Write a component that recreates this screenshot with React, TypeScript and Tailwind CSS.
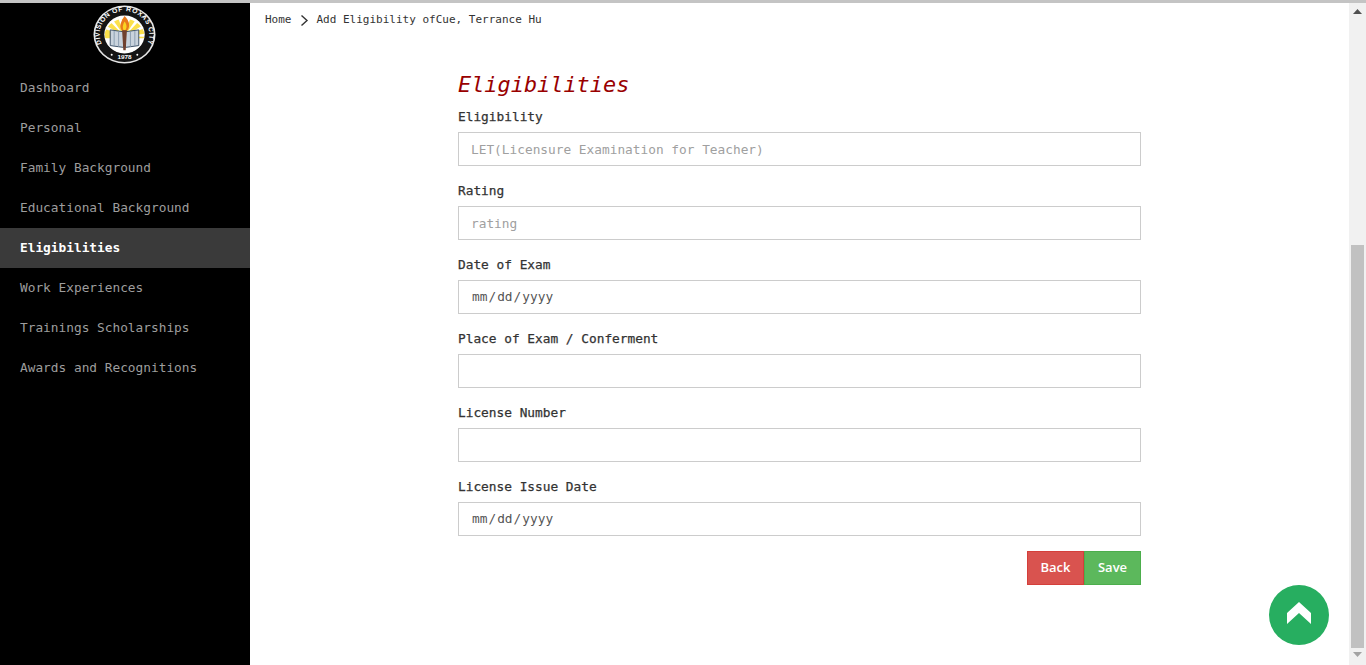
import React from "react";

const mono = "font-['DejaVu_Sans_Mono','Liberation_Mono',monospace]";

const nav = [
  "Dashboard",
  "Personal",
  "Family Background",
  "Educational Background",
  "Eligibilities",
  "Work Experiences",
  "Trainings Scholarships",
  "Awards and Recognitions",
];

const inputCls =
  "block w-full h-[34px] bg-white border border-[#cccccc] px-[12px] text-[12.8px] text-[#555] outline-none placeholder:text-[#a0a0a0] [&::-webkit-calendar-picker-indicator]:hidden " +
  mono;

function Logo() {
  const rays = [-75, -50, -25, 0, 25, 50, 75];
  return (
    <svg width="63" height="59" viewBox="0 0 64 64" preserveAspectRatio="none" aria-label="Division of Roxas City seal">
      <defs>
        <path id="sealTop" d="M 14.2 49.8 A 25.2 25.2 0 1 1 49.8 49.8" />
        <clipPath id="sealSun">
          <circle cx="32" cy="32" r="20" />
        </clipPath>
      </defs>
      <circle cx="32" cy="32" r="31.5" fill="#e6e6e6" />
      <circle cx="32" cy="32" r="29.8" fill="#141414" />
      <circle cx="32" cy="32" r="20.5" fill="#ffffff" />
      <g clipPath="url(#sealSun)">
        <path d="M11 36 A21 21 0 0 1 53 36 Z" fill="#fbe04a" />
        {rays.map((r) => (
          <path key={r} d="M32 34 L30 9 L34 9 Z" fill="#ffffff" transform={`rotate(${r + 12} 32 34)`} />
        ))}
        <path d="M12 41 H52 V54 H12 Z" fill="#ffffff" />
      </g>
      <path d="M17.5 27 L31 29 V46 L17.5 44 Z" fill="#c9d3dd" stroke="#3b4f66" strokeWidth="1" />
      <path d="M46.5 27 L33 29 V46 L46.5 44 Z" fill="#c9d3dd" stroke="#3b4f66" strokeWidth="1" />
      <path d="M21.5 28 V45 M26 28.5 V45.5 M38 28.5 V45.5 M42.5 28 V45" stroke="#8397ab" strokeWidth="0.9" />
      <path d="M29.5 27 H34.5 L33.2 49 H30.8 Z" fill="#70412f" />
      <path d="M32 12 C37 17 38 23 35 27.5 H29 C26.5 23 28 19 32 12 Z" fill="#e87a1c" />
      <path d="M32 18 C34.5 21 34.5 25 33 27 H31 C29.8 25 30 22 32 18 Z" fill="#f9d423" />
      <text fill="#fff" fontSize="7" fontWeight="700" fontFamily="'Liberation Sans',sans-serif" letterSpacing="0.6">
        <textPath href="#sealTop" startOffset="50%" textAnchor="middle">DIVISION OF ROXAS CITY</textPath>
      </text>
      <text fill="#fff" fontSize="6.5" fontWeight="700" fontFamily="'Liberation Sans',sans-serif" textAnchor="middle" x="32" y="59">
        1978
      </text>
      <circle cx="19" cy="54" r="1" fill="#fff" />
      <circle cx="45" cy="54" r="1" fill="#fff" />
    </svg>
  );
}

function Field({ label, placeholder, type = "text" }: { label: string; placeholder?: string; type?: string }) {
  return (
    <div className="mb-[15px]">
      <label className={"block h-[19px] mb-[6px] text-[12.8px] leading-[19px] text-[#333] [-webkit-text-stroke:0.25px_#333] " + mono}>{label}</label>
      <input className={inputCls} type={type} placeholder={placeholder} />
    </div>
  );
}

export default function App() {
  return (
    <div className="relative h-[665px] w-[1366px] overflow-hidden bg-white flex flex-col">
      <div className="h-[3px] shrink-0 bg-[#c4c4c4]" />
      <div className="flex flex-1 min-h-0">
        <aside className="w-[250px] shrink-0 bg-black">
          <div className="h-[65px] flex items-start justify-center pt-[2px] pr-[1px]">
            <Logo />
          </div>
          <nav>
            {nav.map((n) => (
              <div
                key={n}
                className={
                  "h-[40px] px-[20px] flex items-center text-[12.8px] " +
                  mono +
                  (n === "Eligibilities" ? " bg-[#3a3a3a] text-white font-bold" : " text-[#9d9d9d]")
                }
              >
                {n}
              </div>
            ))}
          </nav>
        </aside>
        <main className="flex-1 min-w-0">
          <div className={"h-[35px] pl-[15px] flex items-center text-[#333] text-[11px] " + mono}>
            <span>Home</span>
            <svg className="mx-[8px]" width="9" height="12" viewBox="0 0 9 12" fill="none">
              <path d="M1.5 0.5 L7 5.5 L1.5 10.5" stroke="#333" strokeWidth="1.4" />
            </svg>
            <span>Add Eligibility ofCue, Terrance Hu</span>
          </div>
          <div className="w-[683px] ml-[208px] pt-[33px]">
            <h1 className={"h-[28px] mb-[8px] text-[21.9px] leading-[28px] italic text-[#990000] " + mono}>Eligibilities</h1>
            <Field label="Eligibility" placeholder="LET(Licensure Examination for Teacher)" />
            <Field label="Rating" placeholder="rating" />
            <Field label="Date of Exam" type="date" />
            <Field label="Place of Exam / Conferment" />
            <Field label="License Number" />
            <Field label="License Issue Date" type="date" />
            <div className="flex justify-end">
              <button className="w-[57px] h-[34px] bg-[#d9534f] border border-[#d43f3a] text-white text-[13px] font-semibold font-['Open_Sans',sans-serif]">
                Back
              </button>
              <button className="w-[57px] h-[34px] bg-[#5cb85c] border border-[#4cae4c] text-white text-[13px] font-semibold font-['Open_Sans',sans-serif]">
                Save
              </button>
            </div>
          </div>
        </main>
        <div className="w-[17px] shrink-0 bg-[#f1f1f1] flex flex-col items-center">
          <svg className="mt-[6px] shrink-0" width="9" height="5" viewBox="0 0 9 5">
            <path d="M4.5 0 L9 5 H0 Z" fill="#505050" />
          </svg>
          <div className="mt-[231px] w-[13px] h-[403px] shrink-0 bg-[#c1c1c1]" />
          <svg className="mt-[4px] shrink-0" width="9" height="5" viewBox="0 0 9 5">
            <path d="M4.5 5 L9 0 H0 Z" fill="#a3a3a3" />
          </svg>
        </div>
      </div>
      <button className="absolute left-[1269px] top-[585px] w-[60px] h-[60px] rounded-full bg-[#27ae60] flex items-center justify-center" aria-label="Back to top">
        <svg className="-mt-[5px]" width="24" height="22" viewBox="0 0 24 22">
          <path d="M12 0 L24 11 V22 L12 11 L0 22 V11 Z" fill="#ffffff" />
        </svg>
      </button>
    </div>
  );
}
